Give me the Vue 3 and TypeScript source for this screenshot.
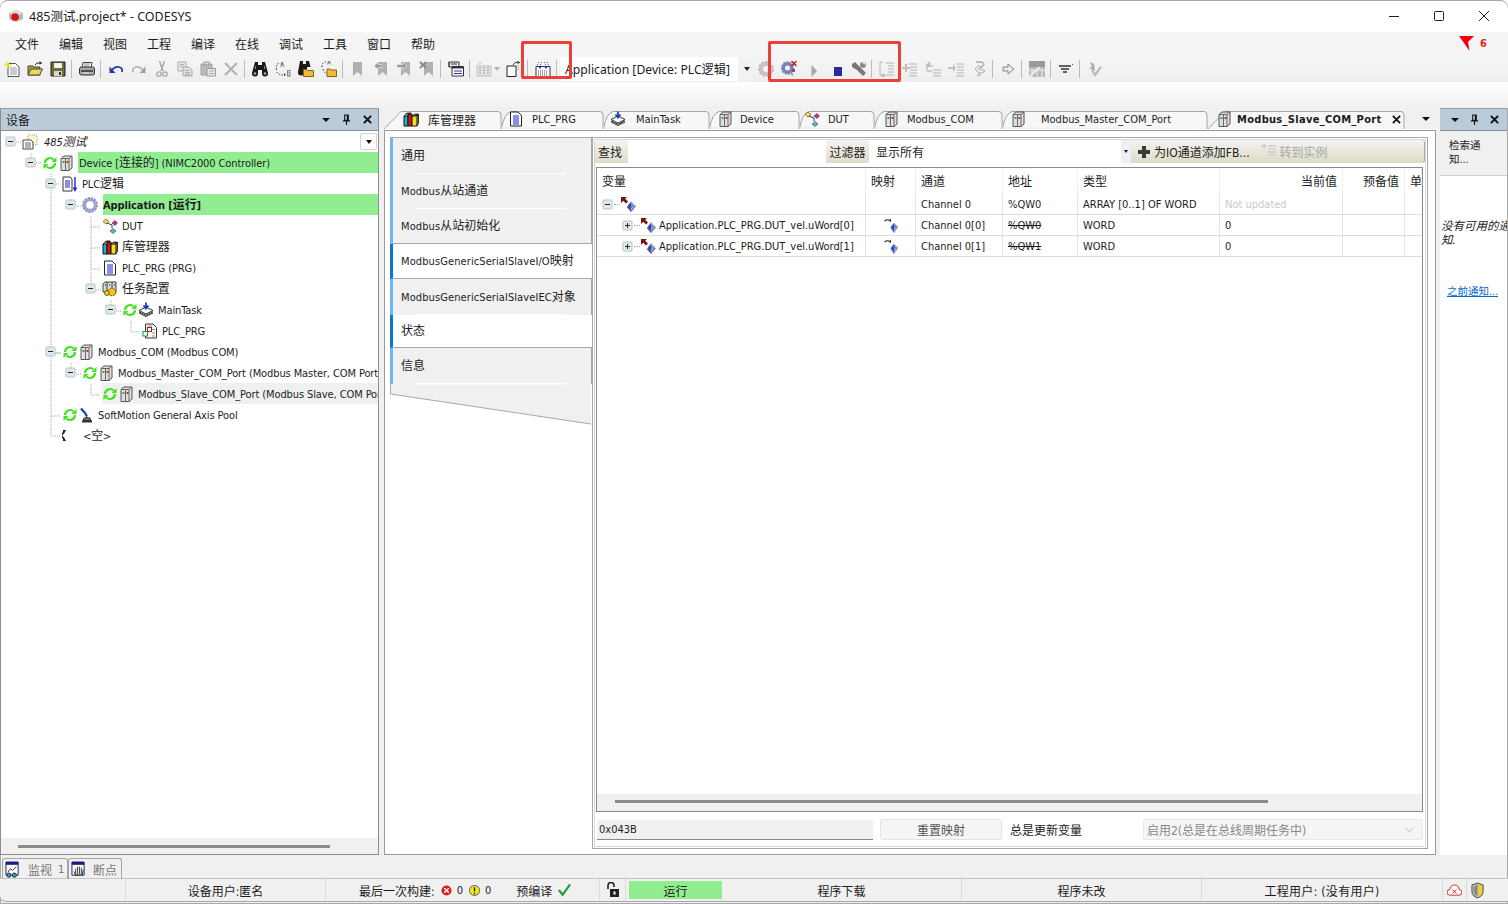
<script setup lang="ts">
interface TreeRow {
  level: number;
  exp?: boolean;
  live?: boolean;
  icon: string;
  label: string;
  cls?: string;
  sel?: boolean;
}

interface Tool {
  icon?: string;
  sep?: boolean;
  wide?: number;
}

const menus = ["文件", "编辑", "视图", "工程", "编译", "在线", "调试", "工具", "窗口", "帮助"];

const tools: Tool[] = [
  { icon: "t-new" }, { icon: "t-open" }, { icon: "t-save" }, { sep: true },
  { icon: "t-print" }, { sep: true },
  { icon: "t-undo" }, { icon: "t-redo" }, { icon: "t-cut" }, { icon: "t-copy" }, { icon: "t-paste" }, { icon: "t-del" }, { sep: true },
  { icon: "t-find" }, { icon: "t-next" }, { icon: "t-findf" }, { icon: "t-repl" }, { sep: true },
  { icon: "t-mark" }, { icon: "t-mark1" }, { icon: "t-mark2" }, { icon: "t-mark3" }, { sep: true },
  { icon: "t-list" }, { sep: true },
  { icon: "t-table", wide: 29 }, { icon: "t-ext" }, { sep: true },
  { icon: "t-build" }, { sep: true }
];

const tools2: Tool[] = [
  { icon: "t-gear" }, { icon: "t-gearx" }, { icon: "t-play", wide: 27 }, { icon: "t-stop", wide: 21 }, { icon: "t-wrench", wide: 21 }, { sep: true },
  { icon: "t-in" }, { icon: "t-step1" }, { icon: "t-step2" }, { icon: "t-step3" }, { icon: "t-step4" }, { sep: true },
  { icon: "t-arrow" }, { sep: true },
  { icon: "t-flow" }, { sep: true },
  { icon: "t-lines" }, { sep: true },
  { icon: "t-check" }
];

const tree: TreeRow[] = [
  { level: 0, exp: true, icon: "i-project", label: "485测试", cls: "ital" },
  { level: 1, exp: true, live: true, icon: "i-device", label: "Device [连接的] (NIMC2000 Controller)", cls: "hl" },
  { level: 2, exp: true, icon: "i-plc", label: "PLC逻辑" },
  { level: 3, exp: true, icon: "i-app", label: "Application [运行]", cls: "hl bold" },
  { level: 4, icon: "i-dut", label: "DUT" },
  { level: 4, icon: "i-lib", label: "库管理器" },
  { level: 4, icon: "i-doc", label: "PLC_PRG (PRG)" },
  { level: 4, exp: true, icon: "i-task", label: "任务配置" },
  { level: 5, exp: true, live: true, icon: "i-stack", label: "MainTask" },
  { level: 6, icon: "i-pou", label: "PLC_PRG" },
  { level: 2, exp: true, live: true, icon: "i-device", label: "Modbus_COM (Modbus COM)" },
  { level: 3, exp: true, live: true, icon: "i-device", label: "Modbus_Master_COM_Port (Modbus Master, COM Port)" },
  { level: 4, live: true, icon: "i-device", label: "Modbus_Slave_COM_Port (Modbus Slave, COM Port)", sel: true },
  { level: 2, live: true, icon: "i-axis", label: "SoftMotion General Axis Pool" },
  { level: 2, icon: "i-empty", label: "<空>", cls: "empty" }
];

const tabs = [
  { w: 118, icon: "i-lib", label: "库管理器", pad: 19, gap: 9, first: true },
  { w: 102, icon: "i-doc", label: "PLC_PRG", pad: 6, gap: 8 },
  { w: 106, icon: "i-stack", label: "MainTask", pad: 6, gap: 10 },
  { w: 90, icon: "i-device", label: "Device", pad: 7, gap: 7 },
  { w: 75, icon: "i-dut", label: "DUT", pad: 4, gap: 8 },
  { w: 128, icon: "i-device", label: "Modbus_COM", pad: 8, gap: 8 },
  { w: 205, icon: "i-device", label: "Modbus_Master_COM_Port", pad: 7, gap: 15 },
  { w: 197, icon: "i-device", label: "Modbus_Slave_COM_Port", pad: 8, gap: 5, active: true, first: true }
];

function tabPath(w: number, first?: boolean): string {
  if (first) return `M0 20 L17 2.5 H${w - 4} Q${w - 1} 2.5 ${w - 1} 6 V20`;
  return `M0 18 Q2 5 9 2.5 H${w - 4} Q${w - 1} 2.5 ${w - 1} 6 V20`;
}

// latin and CJK runs are drawn at different sizes
function runs(text: string) {
  return text
    .split(/([\u4e00-\u9fff]+)/)
    .filter(Boolean)
    .map((t) => ({ t, zh: /[\u4e00-\u9fff]/.test(t) }));
}

const navItems = [
  { label: "通用", h: 37 },
  { label: "Modbus从站通道", h: 35 },
  { label: "Modbus从站初始化", h: 35, last: true },
  { label: "ModbusGenericSerialSlaveI/O映射", h: 35, on: true },
  { label: "ModbusGenericSerialSlaveIEC对象", h: 36 },
  { label: "状态", h: 33, on: true },
  { label: "信息", h: 36 }
];

const columns = [
  { label: "变量", w: 269 },
  { label: "映射", w: 50 },
  { label: "通道", w: 87 },
  { label: "地址", w: 75 },
  { label: "类型", w: 142 },
  { label: "当前值", w: 123, right: true },
  { label: "预备值", w: 62, right: true },
  { label: "单", w: 17 }
];

const channels = [
  { name: "", map: false, channel: "Channel 0", addr: "%QW0", type: "ARRAY [0..1] OF WORD", cur: "Not updated", root: true },
  { name: "Application.PLC_PRG.DUT_vel.uWord[0]", map: true, channel: "Channel 0[0]", addr: "%QW0", type: "WORD", cur: "0" },
  { name: "Application.PLC_PRG.DUT_vel.uWord[1]", map: true, channel: "Channel 0[1]", addr: "%QW1", type: "WORD", cur: "0" }
];
</script>

<template>
  <div class="window">
    <!-- icon sheet -->
    <svg class="sheet" aria-hidden="true">
      <defs>
        <symbol id="e-minus" viewBox="0 0 11 11"><rect x="1" y="1" width="9" height="9" rx="1" fill="#dfe9ec" stroke="#b4c4cc"/><path d="M3 5.500h5" stroke="#222"/></symbol>
        <symbol id="e-plus" viewBox="0 0 11 11"><rect x="1" y="1" width="9" height="9" rx="1" fill="#dfe9ec" stroke="#b4c4cc"/><path d="M3 5.500h5M5.500 3v5" stroke="#222"/></symbol>
        <symbol id="i-live" viewBox="0 0 16 16"><g fill="none" stroke="#3fe21c" stroke-width="2.200"><path d="M3 8a5 5 0 0 1 8.500-3.500"/><path d="M13 8a5 5 0 0 1-8.500 3.500"/></g><path d="M14.500 2v5h-5zM1.500 14V9h5z" fill="#3fe21c"/></symbol>
        <symbol id="i-device" viewBox="0 0 16 16"><path d="M3 3.500 6 1h8v12l-3 2.500H3z" fill="#e0e0e0" stroke="#555"/><path d="M7.500 3.500V15.500M11 3.500V15.500M3 3.500h8l3-2.500" fill="none" stroke="#666"/><rect x="4.500" y="6" width="2" height="2" fill="#22b14c"/><rect x="8.500" y="6" width="2" height="2" fill="#e02020"/></symbol>
        <symbol id="i-project" viewBox="0 0 16 16"><path d="M6 1h9v10H6z" fill="#fff9c8" stroke="#999" stroke-dasharray="1 1"/><path d="M1 6h8l2 2v7H1z" fill="#fff" stroke="#444"/><path d="M3 9h6M3 11h6M3 13h6" stroke="#666"/></symbol>
        <symbol id="i-plc" viewBox="0 0 16 16"><path d="M1 1h7l2 2v12H1z" fill="#fff" stroke="#333"/><path d="M3 5h5M3 7h5M3 9h5M3 11h5" stroke="#1a1ad0"/><path d="M13 1v13M11.500 11.500 13 14.500l1.500-3" fill="none" stroke="#2020e0" stroke-width="1.400"/></symbol>
        <symbol id="i-app" viewBox="0 0 16 16"><circle cx="8" cy="8" r="6.400" fill="none" stroke="#8c90c0" stroke-width="3" stroke-dasharray="2.400 .6"/><circle cx="8" cy="8" r="5" fill="none" stroke="#9ea2d0" stroke-width="2.500"/><circle cx="8" cy="8" r="3.200" fill="#fff"/></symbol>
        <symbol id="i-dut" viewBox="0 0 16 16"><path d="M1 3.500 4 1l3 2.500L4 6z" fill="#f4e030" stroke="#555" stroke-width=".7"/><path d="M10 5l3-2.500L15.500 5 13 7.500z" fill="#d020a0" stroke="#555" stroke-width=".7"/><path d="M8 13l3-2.500 3 2.500-3 2.500z" fill="#40c8c8" stroke="#555" stroke-width=".7"/><path d="M5 5l5 2v3" fill="none" stroke="#333"/></symbol>
        <symbol id="i-lib" viewBox="0 0 16 16"><path d="M1 5h4v10H1z" fill="#19b8c8" stroke="#111"/><path d="M5 3h4v12H5z" fill="#d01818" stroke="#111"/><path d="M9 5h5v10H9z" fill="#f0e020" stroke="#111"/><path d="M1 5l3-3h4L5 3M9 5l3-2h3l-1 2M14 5l1.500-2v9L14 15" fill="#555" stroke="#111" stroke-width=".8"/></symbol>
        <symbol id="i-doc" viewBox="0 0 16 16"><path d="M2.500 1H10l3.500 3.500V15h-11z" fill="#fff" stroke="#222"/><path d="M5 5h6M5 7h6M5 9h6M5 11h6M5 13h6" stroke="#1a1ad8"/></symbol>
        <symbol id="i-task" viewBox="0 0 16 16"><path d="M1 3 3 1h11v10H1z" fill="#d8d8d8" stroke="#444"/><path d="M5 1v10M10 1v10" stroke="#444"/><path d="M3 4h1M7 4h1M12 4h1" stroke="#18a040" stroke-width="2"/><circle cx="10" cy="11" r="3.800" fill="#f2c418" stroke="#6a5000" stroke-dasharray="2 .8"/><circle cx="5" cy="12" r="2.400" fill="#f2d418" stroke="#6a5000"/></symbol>
        <symbol id="i-stack" viewBox="0 0 16 16"><path d="M8 5 15 8.500 8 12 1 8.500z" fill="#fff" stroke="#333"/><path d="M1 11l7 3.500 7-3.500M1 9.800l7 3.500 7-3.500" fill="none" stroke="#333"/><path d="M8 .5v5M5.500 3.500 8 6.500l2.500-3" fill="none" stroke="#1a3ec8" stroke-width="1.800"/></symbol>
        <symbol id="i-pou" viewBox="0 0 16 16"><path d="M3.500 1H11l3.500 3.500V15h-11z" fill="#fff" stroke="#333"/><path d="M5.500 3H10M10 6.500h3M10 10h3M10 13h3" stroke="#888"/><rect x="5.500" y="4.500" width="4" height="4" fill="none" stroke="#b01818"/><path d="M5.500 8.500V12" stroke="#b01818"/><rect x="1" y="8.500" width="4.500" height="4.500" fill="#fff" stroke="#169a38"/></symbol>
        <symbol id="i-axis" viewBox="0 0 16 16"><path d="M3 1.500 7 6l2 3.500" fill="none" stroke="#1a3ec8" stroke-width="2.200"/><path d="M5 13.500a4 3 0 0 1 8 0z" fill="#777" stroke="#222"/><rect x="4" y="13.500" width="10" height="2" fill="#333"/></symbol>
        <symbol id="i-empty" viewBox="0 0 16 16"><path d="M6 2h3L7.500 5 5 7.500 7.500 10 9 13H6v-2L3.500 8V7L6 4z" fill="#222"/></symbol>
        <symbol id="i-var" viewBox="0 0 16 16"><path d="M1 0h6L5.200 1.800 8 4.600 6 6.600 3.200 3.800 1 6z" fill="#7a1414"/><path d="M11 4.500 15.500 9l-4.500 5.500L7 10z" fill="#3a56c8"/><path d="M11 4.500 15.500 9l-4.500 5.500z" fill="#9aa8d8"/><path d="M8.500 8l3 2.500M10 6.500l3 3" stroke="#20245a" stroke-width=".7"/><path d="M7 10l4 4.500 4.500-5.500" fill="none" stroke="#556" stroke-width=".8"/></symbol>
        <symbol id="i-map" viewBox="0 0 16 16"><path d="M1.500 3Q4 .8 7 2.500" fill="none" stroke="#222" stroke-width="1.100"/><path d="M8 3.800V.8L5.500 3z" fill="#222"/><path d="M11 5 15 9l-4 6-3.500-5.500z" fill="#3a56c8"/><path d="M11 5 15 9l-4 6z" fill="#9aa8d8"/><path d="M8.500 8l3 2.500M10 6.500l3 3" stroke="#20245a" stroke-width=".7"/></symbol>

        <symbol id="t-new" viewBox="0 0 16 16"><path d="M4 2.500h7.500L15 6v9.500H4z" fill="#fff" stroke="#555"/><path d="M6 7h7M6 9h7M6 11h7M6 13h7" stroke="#999"/><path d="M3.500 0v7M0 3.500h7M1 1l5 5M6 1 1 6" stroke="#ece030"/></symbol>
        <symbol id="t-open" viewBox="0 0 16 16"><path d="M1 5h5l1 1h6v8H1z" fill="#a8a238" stroke="#444"/><path d="M1 14 4 8h11.500l-3 6z" fill="#ecd850" stroke="#444"/><path d="M8 4a4 3 0 0 1 5-2" fill="none" stroke="#222"/><path d="M15.500 2l-3-1.500v3z" fill="#222"/></symbol>
        <symbol id="t-save" viewBox="0 0 16 16"><path d="M1 1h14v14H1z" fill="#6c6c3c" stroke="#222"/><rect x="4" y="2" width="8" height="5" fill="#f4f4e8"/><rect x="4" y="10" width="8" height="5" fill="#d8d8c8"/><rect x="9" y="11" width="2" height="3" fill="#333"/></symbol>
        <symbol id="t-print" viewBox="0 0 16 16"><path d="M4 1.500h9l-1 5H3z" fill="#fff" stroke="#444"/><path d="M5 3h6M5 5h5" stroke="#888"/><path d="M.5 8q0-2 2-2h11q2 0 2 2v4q0 2-2 2h-11q-2 0-2-2z" fill="#a8a8a8" stroke="#333"/><path d="M2 10h12" stroke="#333" stroke-width="1.500"/><path d="M4 12h6" stroke="#eee"/><path d="M11 12h2" stroke="#e8d020"/></symbol>
        <symbol id="t-undo" viewBox="0 0 16 16"><path d="M4 9q3-4 7-3t3 5" fill="none" stroke="#2838a8" stroke-width="1.800"/><path d="M1.500 5.500v6.500h6z" fill="#2838a8"/></symbol>
        <symbol id="t-redo" viewBox="0 0 16 16"><path d="M12 9q-3-4-7-3t-3 5" fill="none" stroke="#b4b4b4" stroke-width="1.800"/><path d="M14.500 5.500v6.500h-6z" fill="#a0a0a0"/></symbol>
        <symbol id="t-cut" viewBox="0 0 16 16"><path d="M5.500 0l3.500 10M10.500 0 7 10" stroke="#aaa" stroke-width="1.500"/><circle cx="5" cy="13" r="2.200" fill="none" stroke="#aaa" stroke-width="1.300"/><circle cx="11" cy="13" r="2.200" fill="none" stroke="#aaa" stroke-width="1.300"/></symbol>
        <symbol id="t-copy" viewBox="0 0 16 16"><path d="M1 1h8v9H1z" fill="#e8e8e8" stroke="#aaa"/><path d="M3 3.500h4M3 5.500h3" stroke="#aaa"/><path d="M6 6h6l3 3v6H6z" fill="#e0e0e0" stroke="#aaa"/><path d="M8 9.500h4M8 11.500h5M8 13.500h5" stroke="#aaa"/></symbol>
        <symbol id="t-paste" viewBox="0 0 16 16"><path d="M1 3h11v11H1z" fill="#bbb" stroke="#a0a0a0"/><rect x="4" y="1" width="5" height="3" fill="#ddd" stroke="#999"/><path d="M7 7.500h8.500v7.500H7z" fill="#e8e8e8" stroke="#999"/><path d="M9 10h5M9 12.500h5" stroke="#aaa"/></symbol>
        <symbol id="t-del" viewBox="0 0 16 16"><path d="M2 2l12 12M14 2 2 14" stroke="#b0b0b0" stroke-width="2"/></symbol>
        <symbol id="t-find" viewBox="0 0 16 16"><path d="M3 1h3v3h4V1h3l3 11a3 3 0 0 1-6 1V9H6v4a3 3 0 0 1-6-1z" fill="#1a1a1a"/><path d="M3 5h1v3H3zM12 5h1v3h-1z" fill="#888"/><circle cx="3" cy="12.500" r="1.300" fill="#aaa"/><circle cx="13" cy="12.500" r="1.300" fill="#aaa"/></symbol>
        <symbol id="t-next" viewBox="0 0 16 16"><path d="M1.500 9q-1-6 3-7" fill="none" stroke="#333" stroke-dasharray="1.500 1.500"/><path d="M2 11q1 3 6 3" fill="none" stroke="#333" stroke-dasharray="1.500 1.500"/><path d="M6 1h2l1.500 5h-1l-.3-1.500H6.800L6.500 6h-1z" fill="#888"/><path d="M12 9h3.500v6.500H12zM13 10v1.500h1.500V10zM13 12.500V14h1.500v-1.500z" fill="#888"/><path d="M9 12l2 2-2 1z" fill="#444"/></symbol>
        <symbol id="t-findf" viewBox="0 0 16 16"><path d="M2 0h3v3h3V0h3l1.500 6H9v3H6v3a3 3 0 0 1-6-1z" fill="#1a1a1a"/><path d="M5.500 8.500h3l1 1h6v6h-10z" fill="#eebc38" stroke="#886410"/></symbol>
        <symbol id="t-repl" viewBox="0 0 16 16"><path d="M1 6q0-5 4-5M2 8q1 4 4 5" fill="none" stroke="#333" stroke-dasharray="1.500 1.500"/><path d="M7 0h2l1 3.500H9L8.800 2.500H7.500L7 3.500H6z" fill="#888"/><path d="M6 8h3l1 1h5.500v6.500H6z" fill="#eebc38" stroke="#886410"/></symbol>
        <symbol id="t-mark" viewBox="0 0 16 16"><path d="M3 1h9v14l-4.500-4L3 15z" fill="#b0b0b0"/></symbol>
        <symbol id="t-mark1" viewBox="0 0 16 16"><path d="M5 1h9v14l-4.500-4L5 15z" fill="#b0b0b0"/><path d="M1 5 5 1.500v2h4v3H5v2z" fill="#999" stroke="#eee" stroke-width=".6"/></symbol>
        <symbol id="t-mark2" viewBox="0 0 16 16"><path d="M5 1h9v14l-4.500-4L5 15z" fill="#b0b0b0"/><path d="M11 5 7 1.500v2H1v3h6v2z" fill="#999" stroke="#eee" stroke-width=".6"/></symbol>
        <symbol id="t-mark3" viewBox="0 0 16 16"><path d="M5 1h9v14l-4.500-4L5 15z" fill="#b0b0b0"/><path d="M1 1l6 6M7 1 1 7" stroke="#888" stroke-width="1.800"/></symbol>
        <symbol id="t-list" viewBox="0 0 16 16"><path d="M1 1h10v5H1z" fill="#eee" stroke="#333"/><path d="M1 6V1M3 3h6" stroke="#333"/><path d="M4 5.500h11.500V15H4z" fill="#fff" stroke="#333"/><path d="M4 5.500h11.500v2H4z" fill="#333"/><path d="M6 10h8M6 12.500h8" stroke="#2838a8"/></symbol>
        <symbol id="t-table" viewBox="0 0 16 16"><path d="M1 5h14v10H1z" fill="#e4e4e4" stroke="#c0c0c0"/><path d="M3 7h2M7 7h2M11 7h2M3 9.500h2M7 9.500h2M11 9.500h2M3 12h2M7 12h2M11 12h2" stroke="#a0a0a0"/><path d="M4 0v6M1 3h6M2 1l4 4M6 1 2 5" stroke="#ddd"/></symbol>
        <symbol id="t-ext" viewBox="0 0 16 16"><path d="M1 5h9v10.500H1z" fill="#fff" stroke="#222"/><path d="M7 4q1-3 5-3" fill="none" stroke="#333"/><path d="M14.500 1.500l-3-1.500v3z" fill="#333"/><path d="M12 4v6" stroke="#888" stroke-dasharray="1 1"/></symbol>
        <symbol id="t-build" viewBox="0 0 16 16"><path d="M1 5.500h14v10H1z" fill="#fff" stroke="#333"/><path d="M3 1.500h1M6 1.500h1M9 1.500h1M12 1.500h1M2 3.500h1M5 3.500h1M10 3.500h1M13 3.500h1" stroke="#5068d8"/><path d="M3 5l2 3 2-3zM9 5l2 3 2-3z" fill="#1a2eb8"/><path d="M3 10h10M3 12h10M3 14h10" stroke="#555" stroke-dasharray="1 1"/></symbol>
        <symbol id="t-gear" viewBox="0 0 16 16"><circle cx="8" cy="8" r="5" fill="none" stroke="#c4c4c4" stroke-width="4"/><circle cx="8" cy="8" r="7" fill="none" stroke="#bbb" stroke-width="1.800" stroke-dasharray="2.500 1.500"/></symbol>
        <symbol id="t-gearx" viewBox="0 0 16 16"><circle cx="6.500" cy="7" r="4.200" fill="none" stroke="#7b80b8" stroke-width="3.400"/><circle cx="6.500" cy="7" r="6" fill="none" stroke="#8488c0" stroke-width="1.500" stroke-dasharray="2 1.300"/><path d="M10.500 0l5 5M15.500 0l-5 5" stroke="#d01818" stroke-width="1.500"/><path d="M11 8h3v3h-3zM10 12l2 1-1 2.500z" fill="#666"/></symbol>
        <symbol id="t-play" viewBox="0 0 16 16"><path d="M5.500 4 11 10l-5.500 6z" fill="#a8a8a8"/></symbol>
        <symbol id="t-stop" viewBox="0 0 16 16"><rect x="4" y="6" width="8" height="9" fill="#2a2a98"/></symbol>
        <symbol id="t-wrench" viewBox="0 0 16 16"><path d="M1 3l3-2 5 5 6 6-3 3-6-6-5-3z" fill="#787878"/><circle cx="12" cy="4" r="3" fill="#8c8c8c"/><path d="M11 1.500 14 1v3z" fill="#eee"/></symbol>
        <symbol id="t-in" viewBox="0 0 16 16"><path d="M7 2h8M9 5h6M9 8h6M9 11h6M7 14h8" stroke="#b4b4b4"/><path d="M4 1H1v13h3" fill="none" stroke="#b4b4b4"/><path d="M1 14h3v-2l3 3-3 1z" fill="#b4b4b4"/></symbol>
        <symbol id="t-step1" viewBox="0 0 16 16"><path d="M7 3h8M8 6h7M8 9h7M8 12h7M7 15h8" stroke="#b4b4b4"/><path d="M3 3h2v3h3v2H5v3H3V8H0V6h3z" fill="#c0c0c0"/></symbol>
        <symbol id="t-step2" viewBox="0 0 16 16"><path d="M8 9h8M8 12h8M8 15h8" stroke="#b4b4b4"/><path d="M2 3v7h5M2 5h6" fill="none" stroke="#aaa"/><path d="M5 0 1.500 3.500 5 6z" fill="#bbb"/></symbol>
        <symbol id="t-step3" viewBox="0 0 16 16"><path d="M8 3h8M9 6h7M9 9h7M9 12h7M8 15h8" stroke="#b4b4b4"/><path d="M0 6h5V3l3 4-3 4V8H0z" fill="#c0c0c0"/></symbol>
        <symbol id="t-step4" viewBox="0 0 16 16"><path d="M5 1h6l2 2-2 3H8" fill="none" stroke="#aaa" stroke-width="1.300"/><path d="M8 4 4 8l4 4h3l3-2-4-2H7" fill="#eee" stroke="#aaa"/><path d="M5 15h5l-2-3z" fill="#bbb"/></symbol>
        <symbol id="t-arrow" viewBox="0 0 16 16"><path d="M3 6h5V3l6 5-6 5v-3H3z" fill="#e8e8e8" stroke="#888"/></symbol>
        <symbol id="t-flow" viewBox="0 0 16 16"><rect width="16" height="16" fill="#b8b8b8"/><path d="M0 9h16M8 9v7M3 9v7M13 9v7" stroke="#f4f4f4"/><path d="M0 16 16 1" stroke="#f0f0f0" stroke-width="2"/><path d="M0 0h16v6H0z" fill="#999"/></symbol>
        <symbol id="t-lines" viewBox="0 0 16 16"><path d="M1 5h12M3 8h8M5 11h4" stroke="#333" stroke-width="1.500"/><path d="M14 3h1v1h-1z" fill="#555"/></symbol>
        <symbol id="t-check" viewBox="0 0 16 16"><path d="M5 9l3 5 6-8" fill="none" stroke="#bbb" stroke-width="2.200"/><path d="M3 1l2 5-3 1 6 3-1-7z" fill="#aaa"/></symbol>
      </defs>
    </svg>

    <!-- title bar -->
    <div class="titlebar">
      <svg class="app-icon" viewBox="0 0 16 14">
        <path d="M1 4 8 1l7 3v6l-7 3-7-3z" fill="#b9b9b9"/>
        <path d="M8 1l7 3-7 3-7-3z" fill="#dadada"/>
        <circle cx="7" cy="8" r="3.800" fill="#d8101a"/>
      </svg>
      <span class="title-text">485测试.project* - CODESYS</span>
      <div class="win-btns">
        <svg class="win-btn" viewBox="0 0 12 12"><path d="M1 6.500h10" stroke="#222"/></svg>
        <svg class="win-btn" viewBox="0 0 12 12"><rect x="1.500" y="1.500" width="9" height="9" rx="1" fill="none" stroke="#222"/></svg>
        <svg class="win-btn" viewBox="0 0 12 12"><path d="M1 1l10 10M11 1 1 11" stroke="#222"/></svg>
      </div>
    </div>

    <!-- menu -->
    <div class="menubar">
      <span v-for="m in menus" :key="m" class="menu">{{ m }}</span>
      <div class="filter">
        <svg class="filter-icon" viewBox="0 0 15 15"><path d="M0 0h15l-6 6 1.500 9L5 7z" fill="#f0000c"/></svg>
        <span class="filter-n">6</span>
      </div>
    </div>

    <!-- toolbar -->
    <div class="toolbar">
      <template v-for="(t, i) in tools" :key="i">
        <span v-if="t.sep" class="tsep"></span>
        <span v-else class="tool" :style="t.wide ? { width: t.wide + 'px' } : undefined">
          <svg class="ic"><use :href="'#' + t.icon" /></svg>
          <span v-if="t.wide === 29" class="mini-arrow"></span>
        </span>
      </template>
      <div class="app-combo">
        <span>Application [Device: PLC逻辑]</span>
        <span class="mini-arrow dark"></span>
      </div>
      <template v-for="(t, i) in tools2" :key="'b' + i">
        <span v-if="t.sep" class="tsep"></span>
        <span v-else class="tool" :style="t.wide ? { width: t.wide + 'px' } : undefined">
          <svg class="ic"><use :href="'#' + t.icon" /></svg>
        </span>
      </template>
    </div>
    <div class="spacer"></div>

    <!-- docked area -->
    <div class="workspace">
      <section class="devices">
        <header class="dock-head">
          <span class="dock-title">设备</span>
          <span class="dock-ctl">
            <span class="head-arrow"></span>
            <svg class="pin" viewBox="0 0 10 12"><path d="M3 1h4v6H3zM1 7.500h8M5 8v4M6 1v6" fill="none" stroke="#111" stroke-width="1.200"/></svg>
            <svg class="cross" viewBox="0 0 10 10"><path d="M1 1l8 8M9 1 1 9" stroke="#111" stroke-width="2.200"/></svg>
          </span>
        </header>
        <div class="tree">
          <svg class="tree-lines" width="379" height="330">
            <path
              d="M31 22v10M51 43v262h10M91 85v74M91 96h9M91 117h9M91 138h9M111 169v10M131 190v11h9M91 253v11h9M71 232v10M51 222h9M51 285h9M16 11h5M36 32h5M56 53h5M76 75h5M96 159h5M116 180h5M56 222h5M76 243h5"
              fill="none"
              stroke="#aaa"
              stroke-dasharray="1 1"
            />
          </svg>
          <div v-for="(r, i) in tree" :key="i" class="row" :style="{ paddingLeft: 4 + 20 * r.level + 'px' }">
            <span class="slot">
              <svg v-if="r.exp" class="exp"><use href="#e-minus" /></svg>
            </span>
            <div class="row-body" :class="{ sel: r.sel }">
              <svg v-if="r.live" class="ic"><use href="#i-live" /></svg>
              <svg class="ic" :class="{ pull: r.cls === 'empty' }"><use :href="'#' + r.icon" /></svg>
              <span class="label" :class="r.cls">
                <span v-for="(p, k) in runs(r.label)" :key="k" :class="{ zh: p.zh }">{{ p.t }}</span>
              </span>
            </div>
          </div>
          <span class="tree-combo"><span class="head-arrow small"></span></span>
        </div>
        <div class="hscroll"><span class="thumb device-thumb"></span></div>
      </section>

      <section class="editor">
        <div class="tabstrip">
          <div
            v-for="t in tabs"
            :key="t.label"
            class="tab"
            :class="{ active: t.active }"
            :style="{ width: t.w + 'px', paddingLeft: t.pad + 'px' }"
          >
            <svg class="tab-shape" :width="t.w" height="20">
              <path :d="tabPath(t.w, t.first)" fill="#f7f7f7" stroke="#a4a4a4" />
            </svg>
            <svg class="ic tab-ic"><use :href="'#' + t.icon" /></svg>
            <span class="tab-label" :class="{ zh: t.icon === 'i-lib' }" :style="{ marginLeft: t.gap + 'px' }">{{ t.label }}</span>
            <svg v-if="t.active" class="tab-x" viewBox="0 0 10 10"><path d="M1 1l8 8M9 1 1 9" stroke="#111" stroke-width="2"/></svg>
          </div>
          <span class="strip-arrow"><span class="head-arrow"></span></span>
        </div>

        <div class="editor-body">
          <div class="nav">
            <div
              v-for="n in navItems"
              :key="n.label"
              class="nav-item"
              :class="{ on: n.on, last: n.last }"
              :style="{ height: n.h + 'px' }"
            >
              <span>
                <span v-for="(p, k) in runs(n.label)" :key="k" :class="{ zh: p.zh }">{{ p.t }}</span>
              </span>
            </div>
            <svg class="nav-foot" width="202" height="41" viewBox="0 0 202 41">
              <path d="M0 0H201V40L0 10z" fill="#f0f0f0"/>
              <path d="M.5 0V10L201 40" fill="none" stroke="#a8a8a8"/>
              <path d="M26 0H176" stroke="#fff"/>
            </svg>
          </div>

          <div class="panel">
            <div class="filterbar">
              <span class="bar-label">查找</span>
              <span class="bar-input"></span>
              <span class="bar-label filter-label">过滤器</span>
              <span class="bar-select">显示所有<span class="select-btn"><span class="mini-arrow dark"></span></span></span>
              <div class="bar-actions">
                <svg class="plus" viewBox="0 0 12 12"><path d="M4 0h4v4h4v4H8v4H4V8H0V4h4z" fill="#3a3a3a"/></svg>
                <span class="act">为IO通道添加FB...</span>
                <svg class="goto" viewBox="0 0 16 12"><path d="M0 2h5M3 0l3 2-3 2M8 2h8M8 5h8M8 8h8M8 11h8" stroke="#c0c0c0" fill="none"/></svg>
                <span class="act dim">转到实例</span>
              </div>
            </div>

            <div class="grid">
              <div class="grid-head">
                <span
                  v-for="c in columns"
                  :key="c.label"
                  class="cell"
                  :class="{ right: c.right }"
                  :style="{ width: c.w + 'px' }"
                >{{ c.label }}</span>
              </div>
              <div v-for="(ch, i) in channels" :key="i" class="grid-row">
                <span class="cell var" :style="{ width: columns[0].w + 'px' }">
                  <svg class="exp" :class="ch.root ? 'e-root' : 'e-child'"><use :href="ch.root ? '#e-minus' : '#e-plus'" /></svg>
                  <span class="tick"></span>
                  <svg class="ic var-ic"><use href="#i-var" /></svg>
                  <span class="var-name">{{ ch.name }}</span>
                </span>
                <span class="cell mapc" :style="{ width: columns[1].w + 'px' }">
                  <svg v-if="ch.map" class="ic"><use href="#i-map" /></svg>
                </span>
                <span class="cell" :style="{ width: columns[2].w + 'px' }">{{ ch.channel }}</span>
                <span class="cell" :class="{ struck: !ch.root }" :style="{ width: columns[3].w + 'px' }">{{ ch.addr }}</span>
                <span class="cell" :style="{ width: columns[4].w + 'px' }">{{ ch.type }}</span>
                <span class="cell" :class="{ stale: ch.root }" :style="{ width: columns[5].w + 'px' }">{{ ch.cur }}</span>
                <span class="cell" :style="{ width: columns[6].w + 'px' }"></span>
              </div>
              <div class="grid-fill"></div>
              <div class="hscroll grid-scroll"><span class="thumb grid-thumb"></span></div>
            </div>

            <div class="panel-foot">
              <span class="addr-box">0x043B</span>
              <span class="reset-btn">重置映射</span>
              <span class="update-label">总是更新变量</span>
              <span class="update-select">
                <span>启用2(总是在总线周期任务中)</span>
                <svg class="chev" viewBox="0 0 10 6"><path d="M1 1l4 4 4-4" fill="none" stroke="#b4b4b4"/></svg>
              </span>
            </div>
          </div>
        </div>
      </section>

      <aside class="notes">
        <header class="dock-head notes-head">
          <span class="dock-ctl">
            <span class="head-arrow"></span>
            <svg class="pin" viewBox="0 0 10 12"><path d="M3 1h4v6H3zM1 7.500h8M5 8v4M6 1v6" fill="none" stroke="#111" stroke-width="1.200"/></svg>
            <svg class="cross" viewBox="0 0 10 10"><path d="M1 1l8 8M9 1 1 9" stroke="#111" stroke-width="2.200"/></svg>
          </span>
        </header>
        <div class="notes-top">检索通知...</div>
        <p class="notes-empty">没有可用的通知.</p>
        <a class="notes-link">之前通知...</a>
      </aside>
    </div>

    <!-- lower tabs -->
    <div class="lower-tabs">
      <span class="lower-tab t1">
        <svg class="lower-ic" viewBox="0 0 16 18"><path d="M1 1h13v14H1z" fill="#fff" stroke="#1a1a70"/><path d="M1 1h13v3H1z" fill="#1a1a80"/><path d="M3 12l3-4 2 2 4-4" fill="none" stroke="#333"/><circle cx="4" cy="15" r="2.200" fill="#30a8c8" stroke="#222"/><circle cx="10" cy="15" r="2.200" fill="#30a8c8" stroke="#222"/></svg>
        <span>监视</span><span class="tab-n">1</span>
      </span>
      <span class="lower-tab t2">
        <svg class="lower-ic" viewBox="0 0 16 18"><path d="M1 1h13v14H1z" fill="#fff" stroke="#1a1a70"/><path d="M1 1h13v3H1z" fill="#1a1a80"/><path d="M5 16V8M7 14V6M9 14V6M11 14V7M3 11l2 4h7l1-6" fill="none" stroke="#333"/></svg>
        <span>断点</span>
      </span>
    </div>

    <!-- status -->
    <footer class="status">
      <span class="st w126"></span>
      <span class="st w200">设备用户:匿名</span>
      <span class="st build">
        <span class="b-label">最后一次构建:</span>
        <svg class="st-ic" viewBox="0 0 12 12"><circle cx="6" cy="6" r="5.500" fill="#e01818"/><path d="M3.500 3.500l5 5M8.500 3.500l-5 5" stroke="#fff" stroke-width="1.600"/></svg>
        <span>0</span>
        <svg class="st-ic" viewBox="0 0 12 12"><circle cx="6" cy="6" r="5.500" fill="#f4e818" stroke="#555"/><path d="M6 2.500v4.500M6 8.500v1.500" stroke="#222" stroke-width="1.500"/></svg>
        <span>0</span>
        <span class="pre">预编译</span>
        <svg class="check" viewBox="0 0 16 14"><path d="M2 7l4 5 8-11" fill="none" stroke="#1aa032" stroke-width="2.200"/></svg>
      </span>
      <span class="st w26">
        <svg class="lock" viewBox="0 0 14 16"><path d="M2 7V3.500a3 3 0 0 1 6 0V5" fill="none" stroke="#222" stroke-width="1.600"/><rect x="4" y="7" width="9" height="8" fill="#222"/><rect x="7.500" y="9.500" width="2" height="3" fill="#fff"/></svg>
      </span>
      <span class="st run"><b>运行</b></span>
      <span class="st w239">程序下载</span>
      <span class="st w240">程序未改</span>
      <span class="st w241">工程用户: (没有用户)</span>
      <span class="st w24">
        <svg class="cloud" viewBox="0 0 16 14"><path d="M3 12a3 3 0 0 1 0-6 5 5 0 0 1 10 0 3 3 0 0 1 0 6z" fill="#fff" stroke="#e01818"/><path d="M6 6l4 4M10 6l-4 4" stroke="#e01818"/></svg>
      </span>
      <span class="st end">
        <svg class="shield" viewBox="0 0 14 18"><path d="M7 1l6 2v7q0 5-6 7-6-2-6-7V3z" fill="#b8b8b8" stroke="#444"/><path d="M7 2v14q5-2 5-6V4z" fill="#f0d030"/><path d="M7 3q-4 1-4 4v3q1 4 4 5" fill="#888"/></svg>
      </span>
    </footer>

    <!-- annotations drawn onto the screenshot -->
    <span class="mark mark-a"></span>
    <span class="mark mark-b"></span>
  </div>
</template>

<style>
html,
body {
  margin: 0;
  background: #fff;
  overflow: hidden;
}
</style>

<style scoped>
.window {
  --ui: "DejaVu Sans Condensed", "Liberation Sans", "Noto Sans CJK SC", sans-serif;
  position: relative;
  display: flex;
  flex-direction: column;
  width: 1508px;
  height: 904px;
  box-sizing: border-box;
  padding-bottom: 2px;
  overflow: hidden;
  background: #f0f0f0;
  border-radius: 8px 8px 0 0;
  box-shadow: inset 0 0 0 1px #a8a8a8;
  font-family: var(--ui);
  font-size: 11px;
  color: #1c1c1c;
}

.sheet {
  position: absolute;
  width: 0;
  height: 0;
}

.ic {
  display: block;
  width: 16px;
  height: 16px;
  flex: none;
}

.zh {
  font-size: 12px;
}

.titlebar {
  display: flex;
  align-items: center;
  height: 32px;
  padding: 0 0 2px 8px;
  background: #fff;
  border-radius: 8px 8px 0 0;
  border-top: 1px solid #a8a8a8;
  box-sizing: border-box;
}

.app-icon {
  width: 16px;
  height: 14px;
  margin-right: 5px;
}

.title-text {
  font-family: "Noto Sans", "Noto Sans CJK SC", sans-serif;
  font-size: 12.5px;
  color: #222;
}

.win-btns {
  display: flex;
  margin-left: auto;
  margin-right: 18px;
  gap: 33px;
}

.win-btn {
  width: 12px;
  height: 12px;
}

.menubar {
  display: flex;
  align-items: center;
  height: 25px;
  padding: 0 0 2px 5px;
  box-sizing: border-box;
  background: #f5f5f5;
}

.menu {
  width: 24px;
  padding: 0 10px;
  font-size: 12px;
}

.filter {
  display: flex;
  align-items: center;
  margin-left: auto;
  margin-right: 21px;
  gap: 6px;
}

.filter-icon {
  width: 15px;
  height: 15px;
}

.filter-n {
  font-size: 11px;
  font-weight: 700;
  color: #e8201a;
}

.toolbar {
  display: flex;
  align-items: center;
  height: 25px;
  padding-bottom: 1px;
  background: linear-gradient(#f5f5f5, #eeeeee);
  box-sizing: border-box;
}

.tool {
  display: flex;
  align-items: center;
  justify-content: center;
  width: 23px;
  height: 22px;
  flex: none;
}

.tsep {
  width: 1px;
  height: 18px;
  margin: 0 3px 0 2px;
  background: #bcbcbc;
  flex: none;
}

.mini-arrow {
  width: 0;
  height: 0;
  margin-left: 2px;
  border: 3px solid transparent;
  border-top: 4px solid #b4b4b4;
  border-bottom: 0;
}

.mini-arrow.dark {
  border-top-color: #222;
}

.app-combo {
  display: flex;
  align-items: center;
  justify-content: space-between;
  width: 194px;
  height: 24px;
  padding: 0 4px 0 5px;
  box-sizing: border-box;
  background: linear-gradient(90deg, #fff 92%, #f2f2f2 92%);
  font-family: "Noto Sans", "Noto Sans CJK SC", sans-serif;
  font-size: 12.2px;
  white-space: nowrap;
  flex: none;
}

.spacer {
  height: 26px;
  background: linear-gradient(#fff, #f0f0f0);
}

.workspace {
  display: flex;
  flex: 1;
  min-height: 0;
  gap: 4px;
}

.devices {
  display: flex;
  flex-direction: column;
  width: 379px;
  margin-right: 1px;
  box-sizing: border-box;
  border: 1px solid #8e8e8e;
  border-top: 1px solid #9a9a9a;
  background: #fff;
  flex: none;
}

.dock-head {
  display: flex;
  align-items: center;
  height: 22px;
  background: #bccbd9;
  border-bottom: 1px solid #8a8f96;
  box-sizing: border-box;
  flex: none;
}

.dock-title {
  margin-left: 5px;
  font-size: 12px;
}

.dock-ctl {
  display: flex;
  align-items: center;
  margin-left: auto;
  margin-right: 6px;
  gap: 12px;
}

.head-arrow {
  display: block;
  width: 0;
  height: 0;
  border: 4px solid transparent;
  border-top: 4px solid #111;
  border-bottom: 0;
}

.head-arrow.small {
  border-width: 3px;
  border-top-width: 4px;
  border-bottom: 0;
}

.pin {
  width: 9px;
  height: 11px;
}

.cross {
  width: 9px;
  height: 9px;
}

.tree {
  position: relative;
  flex: 1;
  min-height: 0;
  overflow: hidden;
}

.tree-lines {
  position: absolute;
  left: -1px;
  top: 0;
  pointer-events: none;
}

.row {
  position: relative;
  display: flex;
  align-items: center;
  height: 21px;
  white-space: nowrap;
  box-sizing: border-box;
}

.slot {
  display: flex;
  align-items: center;
  width: 12px;
  flex: none;
  margin-right: 5px;
}

.exp {
  display: block;
  width: 11px;
  height: 11px;
  flex: none;
}

.row-body {
  display: flex;
  flex: 1;
  align-items: center;
  min-width: 0;
  height: 21px;
  overflow: hidden;
}

.row-body.sel {
  background: #f0f0f0;
}

.label {
  height: 21px;
  margin-left: 4px;
  line-height: 23px;
  letter-spacing: -0.1px;
}

.label.hl {
  flex: 1;
  padding-left: 1px;
  background: #90ee90;
}

.label.bold {
  margin-left: 5px;
  padding-left: 0;
  font-weight: 700;
}

.label.ital {
  font-style: italic;
  margin-left: 6px;
}

.label.empty {
  margin-left: 10px;
}

.pull {
  margin-left: -5px;
}

.tree-combo {
  position: absolute;
  right: 1px;
  top: 2px;
  display: flex;
  align-items: center;
  justify-content: center;
  width: 15px;
  height: 15px;
  background: #fff;
  border: 1px solid #d4d4d4;
  border-radius: 2px;
}

.hscroll {
  position: relative;
  height: 16px;
  background: #f0f0f0;
  flex: none;
}

.thumb {
  position: absolute;
  top: 7px;
  height: 3px;
  background: #8a8a8a;
}

.device-thumb {
  left: 17px;
  width: 312px;
}

.editor {
  display: flex;
  flex-direction: column;
  width: 1052px;
  flex: none;
}

.tabstrip {
  position: relative;
  display: flex;
  height: 22px;
  flex: none;
  background: #f0f0f0;
  border-bottom: 1px solid #fff;
  box-sizing: border-box;
}

.tab {
  position: relative;
  display: flex;
  align-items: center;
  height: 20px;
  margin-top: 1px;
  box-sizing: border-box;
  flex: none;
}

.tab-shape {
  position: absolute;
  left: 0;
  top: 0;
}

.tab-ic,
.tab-label,
.tab-x {
  position: relative;
}

.tab-label {
  white-space: nowrap;
}

.active .tab-label {
  font-weight: 700;
  letter-spacing: 0.3px;
}

.tab-x {
  width: 9px;
  height: 9px;
  margin-left: auto;
  margin-right: 4px;
}

.strip-arrow {
  display: flex;
  align-items: center;
  margin-left: 17px;
}

.editor-body {
  display: flex;
  flex: 1;
  min-height: 0;
  padding: 6px 7px 5px 5px;
  background: #fff;
  border: 1px solid #9a9a9a;
  box-sizing: border-box;
}

.nav {
  display: flex;
  flex-direction: column;
  width: 202px;
  flex: none;
}

.nav-item {
  position: relative;
  display: flex;
  align-items: center;
  padding: 0 0 4px 8px;
  box-sizing: border-box;
  background: #f0f0f0;
  border-left: 3px solid #6cb8f6;
  border-right: 1px solid #a8a8a8;
  letter-spacing: 0.1px;
  white-space: nowrap;
}

.nav-item .zh {
  letter-spacing: 0;
}

.nav-item:first-child {
  border-top: 1px solid #a8a8a8;
}

.nav-item::after {
  content: "";
  position: absolute;
  left: 23px;
  width: 150px;
  bottom: 0;
  height: 1px;
  background: #fff;
}

.nav-item.last {
  border-bottom: 1px solid #a8a8a8;
}

.nav-item.on {
  background: #fff;
  border-left-color: #0a74d8;
  border-bottom: 1px solid #a8a8a8;
  border-right: 0;
}

.nav-item.on::after,
.nav-item.last::after {
  display: none;
}

.nav-foot {
  display: block;
  margin-bottom: auto;
}

.panel {
  display: flex;
  flex-direction: column;
  flex: 1;
  min-width: 0;
  padding: 2px 2px 3px;
  box-sizing: border-box;
  border: 1px solid #a8a8a8;
  box-shadow: inset 0 0 0 1px #fff;
  outline: 1px solid #d8d8d8;
  outline-offset: -3px;
}

.filterbar {
  display: flex;
  align-items: stretch;
  height: 23px;
  flex: none;
  margin: 0 0 4px;
  font-size: 12px;
}

.bar-label {
  display: flex;
  align-items: center;
  width: 33px;
  padding-left: 3px;
  box-sizing: border-box;
  background: linear-gradient(#f4f4f0, #dedcc8);
}

.filter-label {
  width: 43px;
  justify-content: center;
  padding: 0;
}

.bar-input {
  flex: 1;
}

.bar-select {
  position: relative;
  display: flex;
  align-items: center;
  width: 262px;
  padding-left: 7px;
  box-sizing: border-box;
  background: #fff;
}

.select-btn {
  position: absolute;
  right: 0;
  top: 0;
  bottom: 0;
  width: 10px;
  display: flex;
  align-items: center;
  justify-content: center;
  background: #eeeef4;
}

.select-btn .mini-arrow {
  margin: 0;
  border-width: 2px;
  border-top-width: 3px;
  border-bottom: 0;
}

.bar-actions {
  display: flex;
  align-items: center;
  width: 294px;
  padding-left: 7px;
  box-sizing: border-box;
  background: linear-gradient(#f4f4f0, #dcdac6);
  border-right: 1px solid #aaa;
  border-radius: 0 3px 3px 0;
}

.plus {
  width: 12px;
  height: 12px;
  margin-right: 4px;
}

.act {
  white-space: nowrap;
}

.goto {
  width: 16px;
  height: 12px;
  margin: -4px 4px 0 10px;
}

.act.dim {
  color: #a8a8a8;
}

.grid {
  display: flex;
  flex-direction: column;
  flex: 1;
  min-height: 0;
  margin: 0 2px 0 1px;
  border: 1px solid #8a8a8a;
  background: #fff;
}

.grid-head,
.grid-row {
  display: flex;
  flex: none;
  white-space: nowrap;
}

.grid-head {
  height: 26px;
  font-size: 12px;
}

.grid-head .cell {
  border-right: 1px solid #f0f0f0;
  padding-top: 0;
  padding-bottom: 2px;
}

.grid-row {
  height: 21px;
  border-bottom: 1px solid #dcdcdc;
  box-sizing: border-box;
}

.cell {
  display: flex;
  align-items: center;
  padding: 1px 5px 0;
  box-sizing: border-box;
  flex: none;
  overflow: hidden;
}

.grid-row .cell {
  border-right: 1px solid #e4e4e4;
}

.cell.right {
  justify-content: flex-end;
}

.e-child {
  margin-left: 20px;
}

.tick {
  width: 6px;
  height: 0;
  margin-left: 1px;
  border-top: 1px dotted #aaa;
  flex: none;
}

.var-ic {
  margin-right: 3px;
}

.var-name {
  white-space: nowrap;
}

.mapc {
  justify-content: center;
}

.struck {
  text-decoration: line-through;
}

.stale {
  color: #c8c8c8;
}

.grid-fill {
  flex: 1;
}

.grid-thumb {
  left: 18px;
  width: 653px;
  top: 6px;
}

.grid-scroll {
  height: 17px;
}

.panel-foot {
  display: flex;
  align-items: center;
  height: 19px;
  flex: none;
  margin: 8px 2px 6px 2px;
}

.addr-box {
  display: flex;
  align-items: center;
  width: 276px;
  height: 20px;
  padding-left: 2px;
  box-sizing: border-box;
  background: #f0f0f0;
  border-bottom: 1px solid #888;
  flex: none;
}

.reset-btn {
  display: flex;
  align-items: center;
  justify-content: center;
  width: 122px;
  height: 21px;
  margin-left: 7px;
  box-sizing: border-box;
  background: #f5f5f5;
  border: 1px solid #e4e4e4;
  border-radius: 3px;
  color: #555;
  font-size: 12px;
  flex: none;
}

.update-label {
  width: 133px;
  margin-left: 8px;
  flex: none;
  font-size: 12px;
}

.update-select {
  display: flex;
  align-items: center;
  justify-content: space-between;
  flex: 1;
  height: 21px;
  padding: 0 8px 0 3px;
  box-sizing: border-box;
  background: #f5f5f5;
  border: 1px solid #e8e8e8;
  border-radius: 2px;
  color: #888;
  font-size: 12px;
}

.chev {
  width: 9px;
  height: 6px;
}

.notes {
  display: flex;
  flex-direction: column;
  width: 67px;
  min-width: 0;
  background: #fff;
  flex: none;
  overflow: hidden;
  border-top: 1px solid #9a9a9a;
}

.notes-head {
  background: #bccbd9;
}

.notes-head .dock-ctl {
  gap: 11px;
  margin-right: 8px;
}

.notes-top {
  height: 45px;
  padding: 7px 20px 0 9px;
  box-sizing: border-box;
  background: #f0f0f0;
  font-size: 10.5px;
  line-height: 14px;
  border-bottom: 1px solid #d0d0d0;
  flex: none;
}

.notes-empty {
  width: 72px;
  margin: 43px 0 0 1px;
  font-size: 11.5px;
  line-height: 14px;
  font-style: italic;
}

.notes-link {
  margin: 36px 0 0 7px;
  font-size: 10.5px;
  color: #0a6ad0;
  text-decoration: underline;
  white-space: nowrap;
}

.lower-tabs {
  display: flex;
  height: 24px;
  padding: 3px 0 0 2px;
  box-sizing: border-box;
  border-bottom: 1px solid #c4c4c4;
  flex: none;
}

.lower-tab {
  display: flex;
  align-items: center;
  gap: 6px;
  padding-left: 2px;
  box-sizing: border-box;
  height: 21px;
  border: 1px solid #a4a4a4;
  border-bottom: 0;
  border-radius: 3px 3px 0 0;
  color: #777;
  font-size: 12px;
  white-space: nowrap;
}

.tab-n {
  font-size: 11px;
  margin-left: -2px;
}

.t1 {
  width: 66px;
  gap: 8px;
}

.t2 {
  width: 54px;
  gap: 7px;
}

.lower-ic {
  width: 15px;
  height: 17px;
  flex: none;
}

.status {
  display: flex;
  align-items: stretch;
  height: 22px;
  flex: none;
  background: #f0f0f0;
  border-bottom: 1px solid #a8a8a8;
  border-radius: 0 0 0 6px;
  font-size: 12px;
}

.st {
  display: flex;
  align-items: center;
  justify-content: center;
  border-right: 1px solid #dcdcdc;
  box-sizing: border-box;
  flex: none;
}

.w126 { width: 126px; }
.w200 { width: 200px; }
.w26 { width: 26px; }
.w239 { width: 240px; }
.w240 { width: 240px; }
.w241 { width: 241px; letter-spacing: 0.3px; }
.w24 { width: 24px; }
.end { flex: 1; border-right: 0; }

.build {
  width: 274px;
  justify-content: flex-start;
  padding-left: 33px;
  gap: 5px;
}

.build > span:not(.pre):not(.b-label) {
  font-size: 11px;
}

.pre {
  margin-left: 20px;
}

.st-ic {
  width: 11px;
  height: 11px;
  margin-left: 1px;
}

.check {
  width: 15px;
  height: 14px;
}

.lock {
  width: 14px;
  height: 16px;
}

.run {
  width: 96px;
  padding-left: 3px;
  border: 0;
}

.run b {
  display: flex;
  align-items: center;
  justify-content: center;
  width: 100%;
  height: 18px;
  background: #90ee90;
  font-weight: 400;
}

.cloud {
  width: 15px;
  height: 13px;
}

.shield {
  width: 13px;
  height: 17px;
  margin-right: 20px;
}

.mark {
  position: absolute;
  box-sizing: border-box;
  border: 3px solid #ea4038;
  border-radius: 2px;
  pointer-events: none;
}

.mark-a {
  left: 521px;
  top: 41px;
  width: 51px;
  height: 38px;
}

.mark-b {
  left: 768px;
  top: 41px;
  width: 133px;
  height: 41px;
}
</style>
